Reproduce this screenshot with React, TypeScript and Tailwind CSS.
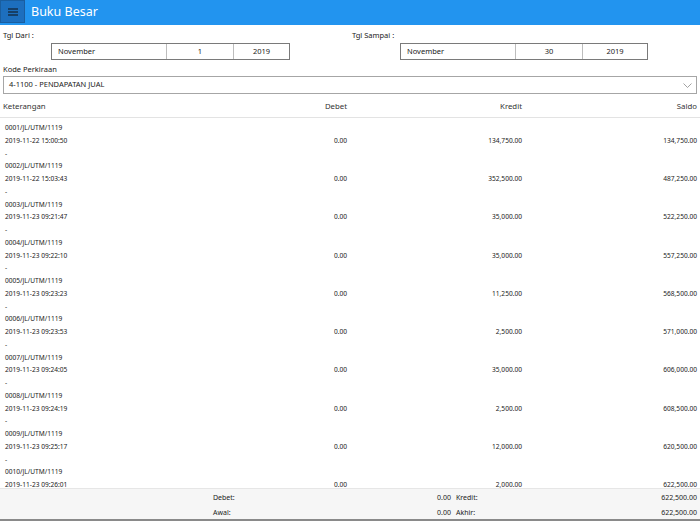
import React from 'react';

type Row = { ref: string; date: string; debet: string; kredit: string; saldo: string };

const rows: Row[] = [
  { ref: '0001/JL/UTM/1119', date: '2019-11-22 15:00:50', debet: '0.00', kredit: '134,750.00', saldo: '134,750.00' },
  { ref: '0002/JL/UTM/1119', date: '2019-11-22 15:03:43', debet: '0.00', kredit: '352,500.00', saldo: '487,250.00' },
  { ref: '0003/JL/UTM/1119', date: '2019-11-23 09:21:47', debet: '0.00', kredit: '35,000.00', saldo: '522,250.00' },
  { ref: '0004/JL/UTM/1119', date: '2019-11-23 09:22:10', debet: '0.00', kredit: '35,000.00', saldo: '557,250.00' },
  { ref: '0005/JL/UTM/1119', date: '2019-11-23 09:23:23', debet: '0.00', kredit: '11,250.00', saldo: '568,500.00' },
  { ref: '0006/JL/UTM/1119', date: '2019-11-23 09:23:53', debet: '0.00', kredit: '2,500.00', saldo: '571,000.00' },
  { ref: '0007/JL/UTM/1119', date: '2019-11-23 09:24:05', debet: '0.00', kredit: '35,000.00', saldo: '606,000.00' },
  { ref: '0008/JL/UTM/1119', date: '2019-11-23 09:24:19', debet: '0.00', kredit: '2,500.00', saldo: '608,500.00' },
  { ref: '0009/JL/UTM/1119', date: '2019-11-23 09:25:17', debet: '0.00', kredit: '12,000.00', saldo: '620,500.00' },
  { ref: '0010/JL/UTM/1119', date: '2019-11-23 09:26:01', debet: '0.00', kredit: '2,000.00', saldo: '622,500.00' },
];

const DateBox: React.FC<{ month: string; day: string; year: string }> = ({ month, day, year }) => (
  <div className="flex h-[17px] border border-[#7a7a7a] text-[7.5px] text-[#1a1a1a]">
    <div className="w-[114px] flex items-center pl-[6px]">{month}</div>
    <div className="w-[67px] flex items-center justify-center border-l border-[#bdbdbd]">{day}</div>
    <div className="flex-1 flex items-center justify-center border-l border-[#bdbdbd]">{year}</div>
  </div>
);

const App: React.FC = () => {
  return (
    <div className="w-[700px] h-[521px] flex flex-col overflow-hidden bg-white text-[#1a1a1a] font-['Noto_Sans',sans-serif]">
      {/* title bar */}
      <div className="h-[25px] flex items-start bg-[#2294ef] shrink-0">
        <button className="w-[25px] h-[23px] flex items-center justify-center bg-[#1d6fbe] border border-[#1a5e9f]">
          <svg width="10" height="8" viewBox="0 0 10 8">
            <path d="M0 1h10M0 4h10M0 7h10" stroke="#111" strokeWidth="1" />
          </svg>
        </button>
        <div className="ml-[6px] mt-[2px] text-[12.5px] leading-[20px] text-white">Buku Besar</div>
      </div>

      {/* filters */}
      <div className="flex pt-[5px] shrink-0">
        <div className="w-[349px] pl-[3px]">
          <div className="text-[7.5px] leading-[11px]">Tgl Dari :</div>
          <div className="ml-[48px] mt-[2px] w-[239px]">
            <DateBox month="November" day="1" year="2019" />
          </div>
        </div>
        <div className="flex-1 pl-[3px]">
          <div className="text-[7.5px] leading-[11px]">Tgl Sampai :</div>
          <div className="ml-[48px] mt-[2px] w-[248px]">
            <DateBox month="November" day="30" year="2019" />
          </div>
        </div>
      </div>

      <div className="px-[3px] pt-[4px] shrink-0">
        <div className="text-[7.5px] leading-[10px]">Kode Perkiraan</div>
        <div className="mt-[2px] h-[18px] flex items-center justify-between border border-[#a6a6a6] pl-[5px] pr-[4px] text-[7.5px]">
          <span>4-1100 - PENDAPATAN JUAL</span>
          <svg width="9" height="5" viewBox="0 0 9 5">
            <path d="M0.5 0.5L4.5 4.5L8.5 0.5" fill="none" stroke="#8a8a8a" strokeWidth="0.8" />
          </svg>
        </div>
      </div>

      {/* table header */}
      <div className="grid grid-cols-4 h-[22px] mt-[2px] items-center border-b border-[#e3e3e3] text-[7.8px] text-[#333] shrink-0">
        <div className="pl-[3px]">Keterangan</div>
        <div className="text-right pr-[3px]">Debet</div>
        <div className="text-right pr-[3px]">Kredit</div>
        <div className="text-right pr-[3px]">Saldo</div>
      </div>

      {/* table body */}
      <div className="flex-1 overflow-hidden pt-[4px]">
        {rows.map((r) => (
          <div key={r.ref} className="grid grid-cols-4 text-[6.6px] leading-[12.75px] text-[#222]">
            <div className="pl-[5px]">
              <div>{r.ref}</div>
              <div>{r.date}</div>
              <div>-</div>
            </div>
            <div className="text-right pr-[3px] pt-[12.75px]">{r.debet}</div>
            <div className="text-right pr-[3px] pt-[12.75px]">{r.kredit}</div>
            <div className="text-right pr-[3px] pt-[12.75px]">{r.saldo}</div>
          </div>
        ))}
      </div>

      {/* footer */}
      <div className="h-[33px] shrink-0 bg-[#f6f6f6] border-t border-[#e6e6e6] border-b-2 border-b-[#8a8a8a] text-[7px] text-[#222] pt-[2px]">
        <div className="flex h-[15px] items-center">
          <div className="w-[213px]" />
          <div className="w-[239px] flex justify-between pr-[1px]">
            <span>Debet:</span>
            <span>0.00</span>
          </div>
          <div className="flex-1 flex justify-between pl-[4px] pr-[3px]">
            <span>Kredit:</span>
            <span>622,500.00</span>
          </div>
        </div>
        <div className="flex h-[14px] items-center">
          <div className="w-[213px]" />
          <div className="w-[239px] flex justify-between pr-[1px]">
            <span>Awal:</span>
            <span>0.00</span>
          </div>
          <div className="flex-1 flex justify-between pl-[4px] pr-[3px]">
            <span>Akhir:</span>
            <span>622,500.00</span>
          </div>
        </div>
      </div>
    </div>
  );
};

export default App;
